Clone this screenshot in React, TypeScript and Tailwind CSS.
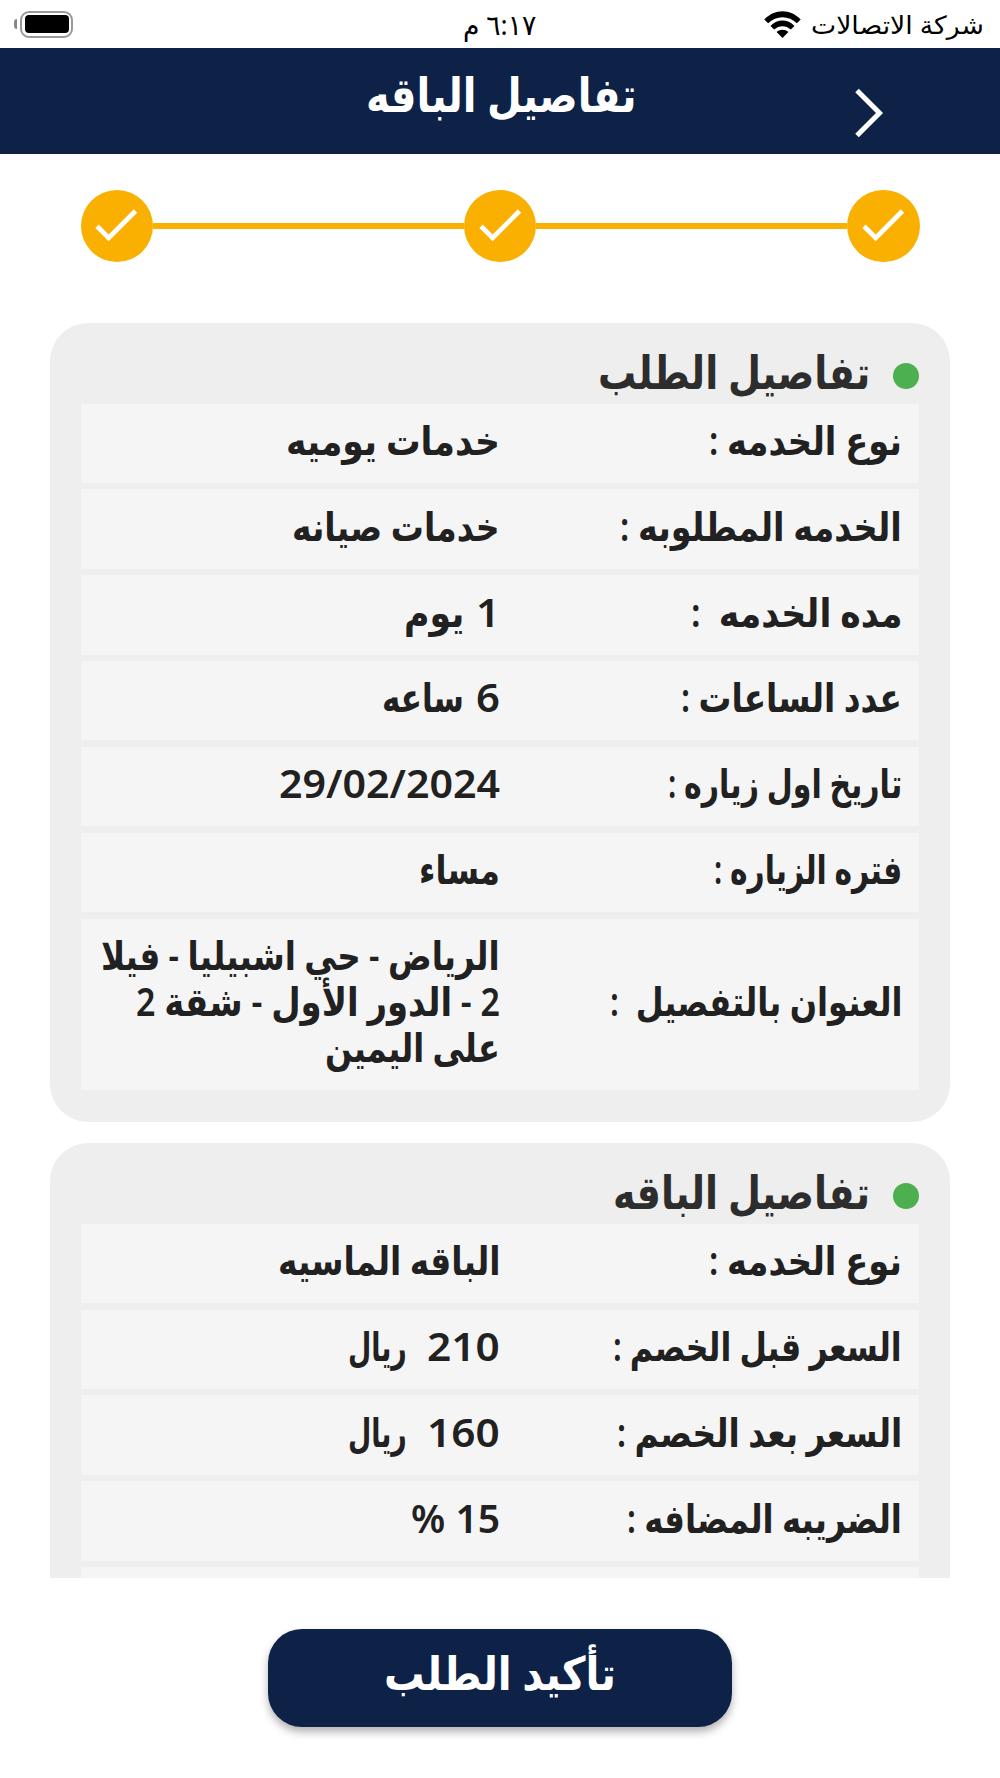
import React, { useLayoutEffect, useRef } from 'react';

type Line = { text: string; width: number };
type Row = { label: Line; value: Line[]; unit?: Line; unitGap?: string };

const orderRows: Row[] = [
  { label: { text: 'نوع الخدمه :', width: 193 }, value: [{ text: 'خدمات يوميه', width: 214 }] },
  { label: { text: 'الخدمه المطلوبه :', width: 282 }, value: [{ text: 'خدمات صيانه', width: 208 }] },
  { label: { text: 'مده الخدمه  :', width: 211 }, value: [{ text: '1', width: 24 }], unit: { text: 'يوم', width: 60 }, unitGap: 'gap-3' },
  { label: { text: 'عدد الساعات :', width: 221 }, value: [{ text: '6', width: 24 }], unit: { text: 'ساعه', width: 82 }, unitGap: 'gap-3' },
  { label: { text: 'تاريخ اول زياره :', width: 234 }, value: [{ text: '29/02/2024', width: 221 }] },
  { label: { text: 'فتره الزياره :', width: 188 }, value: [{ text: 'مساء', width: 81 }] },
  {
    label: { text: 'العنوان بالتفصيل  :', width: 292 },
    value: [
      { text: 'الرياض - حي اشبيليا - فيلا', width: 399 },
      { text: '2 - الدور الأول - شقة 2', width: 364 },
      { text: 'على اليمين', width: 175 },
    ],
  },
];

const packageRows: Row[] = [
  { label: { text: 'نوع الخدمه :', width: 193 }, value: [{ text: 'الباقه الماسيه', width: 222 }] },
  { label: { text: 'السعر قبل الخصم :', width: 289 }, value: [{ text: '210', width: 73 }], unit: { text: 'ريال', width: 59 }, unitGap: 'gap-5' },
  { label: { text: 'السعر بعد الخصم :', width: 285 }, value: [{ text: '160', width: 73 }], unit: { text: 'ريال', width: 59 }, unitGap: 'gap-5' },
  { label: { text: 'الضريبه المضافه :', width: 275 }, value: [{ text: '15 %', width: 89 }] },
  { label: { text: '', width: 0 }, value: [{ text: '', width: 0 }] },
];

// Condenses a line of Arabic text to a given width without breaking the letter joins
const FitText: React.FC<Line> = ({ text, width }) => {
  const ref = useRef<HTMLSpanElement>(null);

  useLayoutEffect(() => {
    const el = ref.current;
    if (!el || !el.offsetWidth) return;
    el.style.transform = `scaleX(${width / el.offsetWidth})`;
  }, [text, width]);

  return (
    <span className="block whitespace-pre" style={{ width }}>
      <span ref={ref} className="inline-block origin-right">{text}</span>
    </span>
  );
};

const StatusBar: React.FC = () => (
  <div className="grid h-12 grid-cols-3 items-center bg-white pr-4 pl-3.5 text-[25px] leading-8 text-black">
    <div className="flex items-center gap-2.5">
      <FitText text="شركة الاتصالات" width={173} />
      <svg className="h-[27px] w-[37px]" viewBox="0 0 37 27">
        <path d="M0.3 8.6C10.5 -2.4 26.5 -2.4 36.7 8.6L32.9 12.3C24.8 4.3 12.2 4.3 4.1 12.3Z" />
        <path d="M6.5 14.9C13.4 7.6 23.6 7.6 30.5 14.9L26.8 18.6C22 14 15 14 10.2 18.6Z" />
        <path d="M12.6 21C16 17.9 21 17.9 24.4 21L18.5 27Z" />
      </svg>
    </div>
    <div className="flex justify-center pl-0.5 text-[28px]">
      <FitText text="٦:١٧ م" width={73} />
    </div>
    <div className="flex items-center justify-end gap-[3px]">
      <div className="h-[27px] w-[53px] rounded-[9px] border-2 border-[#999] p-[2.5px]">
        <div className="h-full rounded-[4px] bg-black" />
      </div>
      <div className="h-2.5 w-[3px] rounded-l-full bg-[#888]" />
    </div>
  </div>
);

const Header: React.FC = () => (
  <header className="relative flex h-[105.5px] justify-center bg-[#0e2248] pt-4 pl-0.5 text-[48px] leading-[60px] font-bold text-white">
    <FitText text="تفاصيل الباقه" width={271} />
    <svg className="absolute top-10 left-[854px] h-[50px] w-[30px]" viewBox="0 0 30 50" fill="none" stroke="white" strokeWidth="5">
      <path d="M3 2.5L25.5 25L3 47.5" />
    </svg>
  </header>
);

const Step: React.FC = () => (
  <div className="flex size-[72.5px] shrink-0 items-center justify-center rounded-full bg-[#f9b000]">
    <svg className="size-[57px]" viewBox="0.3 0.4 24 24" fill="white">
      <path d="M9 16.2L4.8 12l-1.4 1.4L9 19 21 7l-1.4-1.4z" />
    </svg>
  </div>
);

const Steps: React.FC = () => (
  <div className="flex items-center px-[80.5px] pt-9 pb-[61px]">
    <Step />
    <div className="h-[5.5px] flex-1 bg-[#f9b000]" />
    <Step />
    <div className="h-[5.5px] flex-1 bg-[#f9b000]" />
    <Step />
  </div>
);

const DetailsCard: React.FC<{ title: Line; rows: Row[] }> = ({ title, rows }) => (
  <section className="rounded-[38px] bg-[#eeeeee] px-[31px] pb-8">
    <div className="flex h-[80.5px] items-center gap-[11px] pt-[26px]">
      <span className="size-[26px] rounded-full bg-[#4caf50]" />
      <h2 className="-mt-2.5 pr-3 text-[46px] leading-[60px] font-bold text-[#2d2d2d]">
        <FitText {...title} />
      </h2>
    </div>
    <div className="flex flex-col gap-[6.6px]">
      {rows.map((row, i) => (
        <div key={i} className="grid min-h-[79.3px] grid-cols-2 items-center bg-[#f5f5f5] pt-[13.3px] pb-5 text-[40px] leading-[46px] font-semibold text-[#212121]">
          <div className="pr-[17px]">
            <FitText {...row.label} />
          </div>
          <div className={row.unit ? `flex ${row.unitGap}` : ''}>
            {row.value.map((line, j) => (
              <FitText key={j} {...line} />
            ))}
            {row.unit && <FitText {...row.unit} />}
          </div>
        </div>
      ))}
    </div>
  </section>
);

export default function App() {
  return (
    <div dir="rtl" className="flex h-[1778px] w-[1000px] flex-col overflow-hidden bg-white font-['Noto_Sans','DejaVu_Sans',sans-serif]">
      <StatusBar />
      <Header />
      <Steps />
      <main className="flex h-[1254.5px] shrink-0 flex-col gap-[21px] overflow-hidden px-[50px]">
        <DetailsCard title={{ text: 'تفاصيل الطلب', width: 272 }} rows={orderRows} />
        <DetailsCard title={{ text: 'تفاصيل الباقه', width: 257 }} rows={packageRows} />
      </main>
      <button className="mx-auto mt-[51.5px] flex h-[97.5px] w-[464px] justify-center rounded-[34px] bg-[#0e2248] pt-[13px] text-[46px] leading-[60px] font-bold text-white shadow-[0_5px_8px_rgba(0,0,0,0.3)]">
        <FitText text="تأكيد الطلب" width={232} />
      </button>
    </div>
  );
}
